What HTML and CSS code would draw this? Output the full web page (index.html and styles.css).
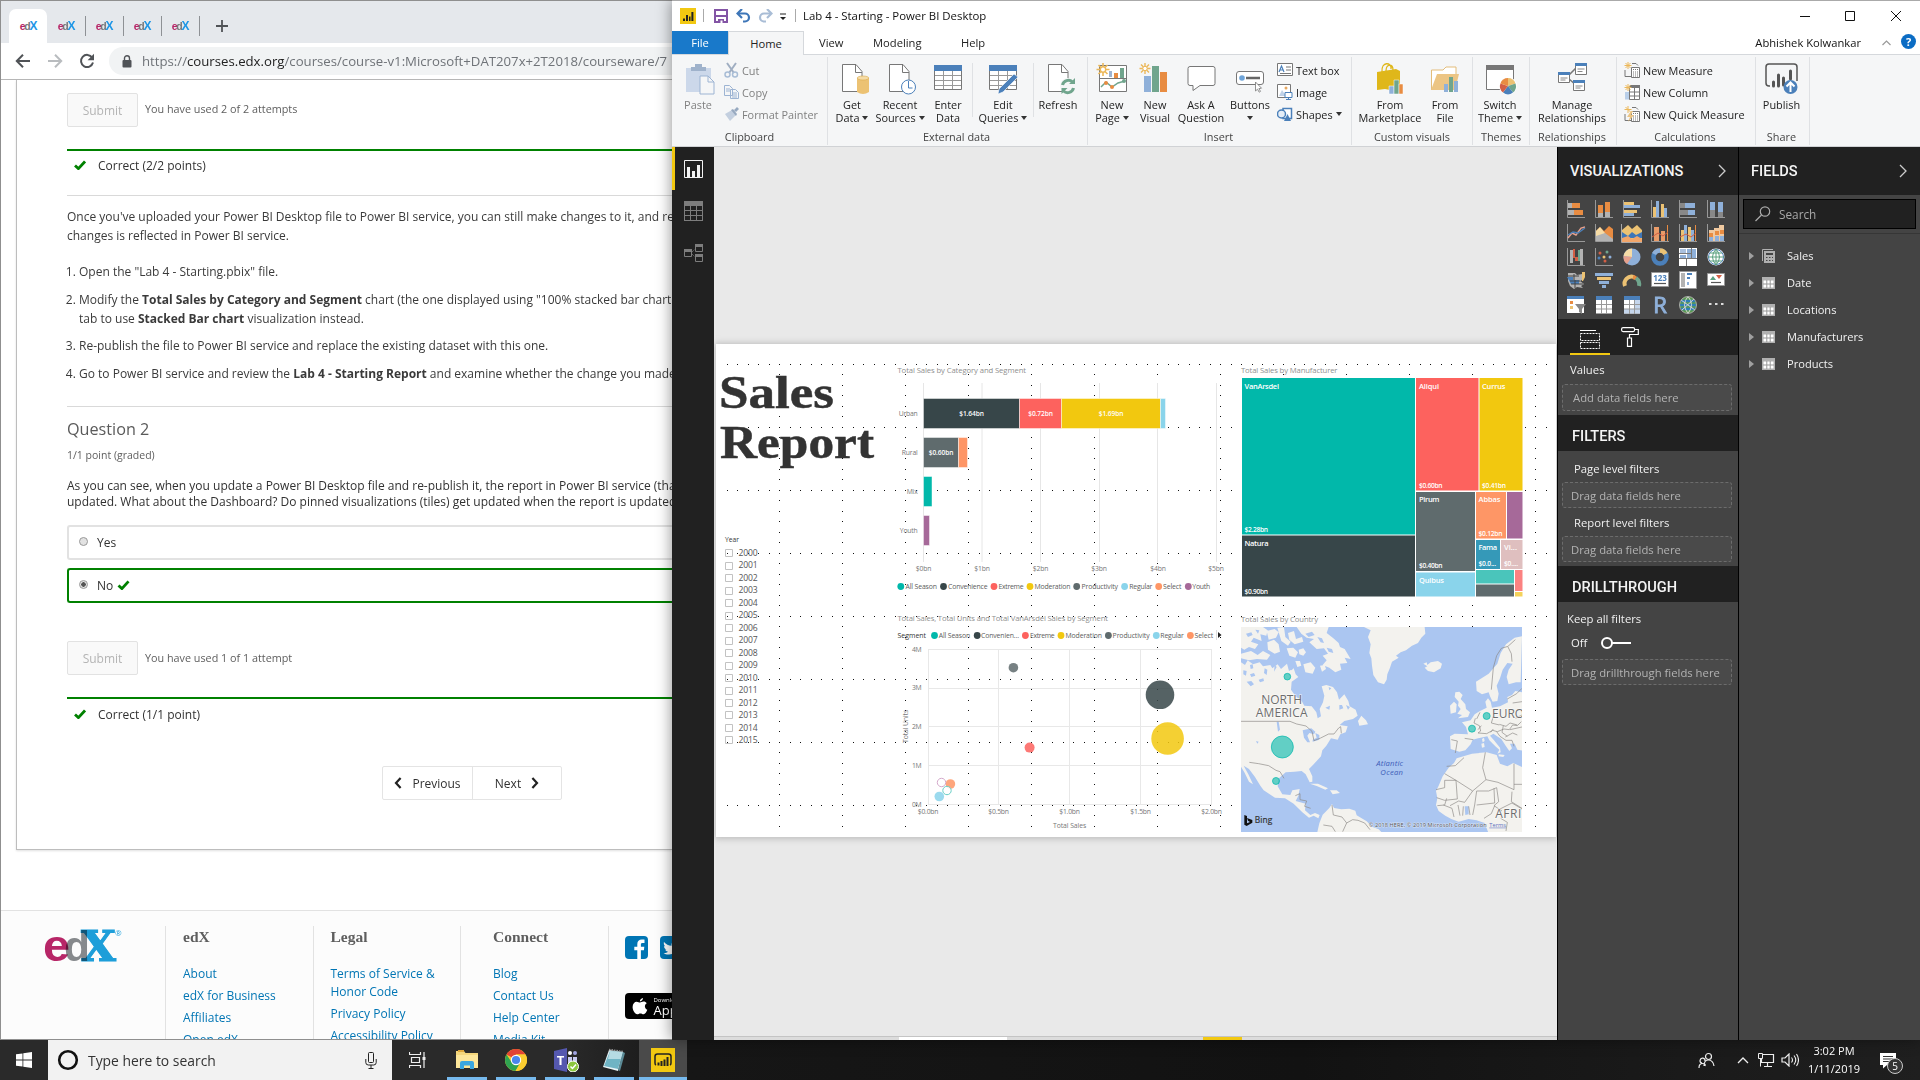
FILE: index.html
```html
<!DOCTYPE html>
<html lang="en">
<head>
<meta charset="utf-8">
<title>Lab 4 - Starting - Power BI Desktop</title>
<link rel="stylesheet" href="styles.css">
</head>
<body>
<div class="desktop">
<div class="windows">

<!-- Browser window -->
<section class="browser">
  <div class="tabstrip">
    <div class="tab active"><span class="fav"><i>e</i><b>d</b><u>X</u></span></div>
    <div class="tab"><span class="fav"><i>e</i><b>d</b><u>X</u></span></div>
    <div class="tab"><span class="fav"><i>e</i><b>d</b><u>X</u></span></div>
    <div class="tab"><span class="fav"><i>e</i><b>d</b><u>X</u></span></div>
    <div class="tab"><span class="fav"><i>e</i><b>d</b><u>X</u></span></div>
    <svg class="plus" width="12" height="12" viewBox="0 0 12 12"><path d="M6 0v12M0 6h12" stroke="#505357" stroke-width="1.8"/></svg>
  </div>
  <div class="toolbar">
    <svg class="nav" width="16" height="16" viewBox="0 0 16 16"><path d="M15 8H2M8 1.8 1.8 8 8 14.2" fill="none" stroke="#505357" stroke-width="2"/></svg>
    <svg class="nav" width="16" height="16" viewBox="0 0 16 16"><path d="M1 8h13M8 1.8 14.2 8 8 14.2" fill="none" stroke="#b9bcbf" stroke-width="2"/></svg>
    <svg class="nav" width="16" height="16" viewBox="0 0 16 16"><path d="M13.2 4.6A6.1 6.1 0 1 0 14 9.6" fill="none" stroke="#505357" stroke-width="2"/><path d="M15 .8v6.4H8.6z" fill="#505357"/></svg>
    <div class="omnibox">
      <svg width="10" height="13" viewBox="0 0 10 13"><rect x="0.5" y="5" width="9" height="7.6" rx="1" fill="#505357"/><path d="M2.5 5V3.2a2.5 2.5 0 0 1 5 0V5" fill="none" stroke="#505357" stroke-width="1.4"/></svg>
      <span class="url">https://<em>courses.edx.org</em>/courses/course-v1:Microsoft+DAT207x+2T2018/courseware/7</span>
    </div>
  </div>
  <div class="page">
    <div class="course">
      <div class="submit-row first"><span class="submit">Submit</span><span class="used">You have used 2 of 2 attempts</span></div>
      <div class="result"><svg width="12" height="10" viewBox="0 0 12 10"><path d="M1 5.4 4.4 8.6 11 1.4" fill="none" stroke="#008100" stroke-width="2.8"/></svg>Correct (2/2 points)</div>
      <div class="rule r1"></div>
      <p class="intro">Once you've uploaded your Power BI Desktop file to Power BI service, you can still make changes to it, and re<br>changes is reflected in Power BI service.</p>
      <ol class="steps">
        <li>Open the "Lab 4 - Starting.pbix" file.</li>
        <li>Modify the <b>Total Sales by Category and Segment</b> chart (the one displayed using "100% stacked bar chart<br>tab to use <b>Stacked Bar chart</b> visualization instead.</li>
        <li>Re-publish the file to Power BI service and replace the existing dataset with this one.</li>
        <li>Go to Power BI service and review the <b>Lab 4 - Starting Report</b> and examine whether the change you made</li>
      </ol>
      <div class="rule r2"></div>
      <h3>Question 2</h3>
      <div class="points">1/1 point (graded)</div>
      <p class="ask">As you can see, when you update a Power BI Desktop file and re-publish it, the report in Power BI service (tha<br>updated. What about the Dashboard? Do pinned visualizations (tiles) get updated when the report is updated</p>
      <div class="choice"><span class="radio"></span>Yes</div>
      <div class="choice right"><span class="radio on"></span>No<svg width="13" height="10" viewBox="0 0 12 10"><path d="M1 5.4 4.4 8.6 11 1.4" fill="none" stroke="#008100" stroke-width="2.8"/></svg></div>
      <div class="submit-row second"><span class="submit">Submit</span><span class="used">You have used 1 of 1 attempt</span></div>
      <div class="result two"><svg width="12" height="10" viewBox="0 0 12 10"><path d="M1 5.4 4.4 8.6 11 1.4" fill="none" stroke="#008100" stroke-width="2.8"/></svg>Correct (1/1 point)</div>
      <div class="pager">
        <span><svg width="8" height="12" viewBox="0 0 8 12"><path d="M6.6 1 2 6l4.600 5" fill="none" stroke="#222" stroke-width="2.2"/></svg>Previous</span>
        <span class="next">Next<svg width="8" height="12" viewBox="0 0 8 12"><path d="M1.400 1 6 6l-4.600 5" fill="none" stroke="#222" stroke-width="2.2"/></svg></span>
      </div>
    </div>
    <footer class="footer">
      <div class="logo-col">
        <svg width="80" height="38" viewBox="0 0 80 38"><text x="-1" y="34" class="lg-e" textLength="27" lengthAdjust="spacingAndGlyphs">e</text><text x="20" y="34" class="lg-d" textLength="26" lengthAdjust="spacingAndGlyphs">d</text><text x="37" y="34" class="lg-x" textLength="35" lengthAdjust="spacingAndGlyphs">X</text><text x="71" y="9" class="lg-r">®</text></svg>
      </div>
      <div class="fcol"><h4>edX</h4><a>About</a><a>edX for Business</a><a>Affiliates</a><a>Open edX</a></div>
      <div class="fcol"><h4>Legal</h4><a class="two">Terms of Service &amp;<br>Honor Code</a><a>Privacy Policy</a><a>Accessibility Policy</a></div>
      <div class="fcol connect"><h4>Connect</h4><a>Blog</a><a>Contact Us</a><a>Help Center</a><a>Media Kit</a></div>
      <div class="fcol social">
        <div class="soc">
          <svg width="23" height="23" viewBox="0 0 23 23"><rect width="23" height="23" rx="4" fill="#0075b4"/><path d="M12.300 23v-8.800H9.300v-3.400h3V8.200c0-3 1.800-4.600 4.500-4.600 1.300 0 2.400.1 2.700.1v3.200h-1.800c-1.500 0-1.800.7-1.800 1.700v2.200h3.400l-.4 3.400h-3V23z" fill="#fff"/></svg>
          <svg width="23" height="23" viewBox="0 0 23 23"><rect width="23" height="23" rx="4" fill="#0075b4"/><path d="M4 6c2 2.500 4.600 3.600 7.600 3.800C11 7 13 5 15 5c1.200 0 2 .4 2.700 1.100L20 5.300l-1.200 2C19 14 14 19 8.500 18.600c-2 0-3.500-.5-5-1.400 2 .1 3.500-.4 4.700-1.400-1.500-.2-2.500-1-3-2.300h1.400C5 13 4 11.800 4 10l1.400.4C4 9.300 3.500 7.600 4 6z" fill="#fff"/></svg>
        </div>
        <div class="appstore"><svg width="16" height="19" viewBox="0 0 16 19"><path d="M11 1c.1 1.700-1.400 3.400-3.100 3.400C7.700 2.700 9.300 1.200 11 1zM8 5.600c.8 0 1.900-1 3.500-1 1.400 0 2.500.7 3.200 1.700-2.700 1.700-2.200 5.300.6 6.500-.7 1.900-2.100 4.400-3.700 4.500-1.200 0-1.700-.8-3.200-.8s-2 .8-3.200.8C3 17.300.6 13.200.6 10c0-3.200 2-5.200 4-5.200 1.500 0 2.500.8 3.400.8z" fill="#fff"/></svg><span><small>Download on the</small>App Store</span></div>
      </div>
    </footer>
  </div>
</section>

<!-- Power BI window -->
<section class="pbi">
  <div class="titlebar">
    <svg width="16" height="16" viewBox="0 0 16 16"><rect width="16" height="16" fill="#f2c811"/><path d="M3 13V10.500h2V13zM6 13V7h2v6zM9 13V8.500h1.500V13zM11.400 13V4h2v9z" fill="#222"/></svg>
    <i class="vsep"></i>
    <svg class="q-save" width="14" height="14" viewBox="0 0 14 14"><path d="M1 1h12v12H1z" fill="#fff" stroke="#8354a5" stroke-width="2"/><path d="M1 7h12" stroke="#8354a5" stroke-width="2"/><path d="M4 10h6v4H4z" fill="#8354a5"/><path d="M6.500 11.500h2V14h-2z" fill="#fff"/></svg>
    <svg class="q-undo" width="15" height="14" viewBox="0 0 15 14"><path d="M2 4.500h7a4 4 0 0 1 0 8H7" fill="none" stroke="#3e76b8" stroke-width="2.200"/><path d="M6 0 1.500 4.500 6 9" fill="none" stroke="#3e76b8" stroke-width="2.200"/></svg>
    <svg class="q-redo" width="15" height="14" viewBox="0 0 15 14"><path d="M13 4.500H6a4 4 0 0 0 0 8h2" fill="none" stroke="#a9bdd6" stroke-width="2.200"/><path d="m9 0 4.500 4.500L9 9" fill="none" stroke="#a9bdd6" stroke-width="2.200"/></svg>
    <svg class="q-more" width="8" height="8" viewBox="0 0 8 8"><path d="M1 1h6" stroke="#222"/><path d="M1 4h6L4 7z" fill="#222"/></svg>
    <i class="vsep s2"></i>
    <span class="ttl">Lab 4 - Starting - Power BI Desktop</span>
    <svg class="wb" width="102" height="12" viewBox="0 0 102 12"><path d="M0 6.500h10M45.500 1.500h9v9h-9zM91 1l10 10M101 1 91 11" fill="none" stroke="#111"/></svg>
  </div>
  <div class="tabs">
    <span class="t-file">File</span><span class="t-home">Home</span><span class="t-view">View</span><span class="t-mod">Modeling</span><span class="t-help">Help</span>
    <span class="user">Abhishek Kolwankar</span>
    <svg class="collapse" width="9" height="6" viewBox="0 0 9 6"><path d="M.5 5 4.500 1l4 4" fill="none" stroke="#999" stroke-width="1.200"/></svg>
    <span class="help">?</span>
  </div>
  <div class="ribbon">
    <div class="group g-clip">
      <div class="items">
        <div class="big dim"><svg width="32" height="32" viewBox="0 0 32 32"><path d="M4 5h25v24H4z" fill="#ccd8ea"/><path d="M9 8V4h4V1h7v3h4v4z" fill="#9fb2cb"/><path d="M18 13h8l6 6v12H18z" fill="#f5f6f7" stroke="#9db4d3"/><path d="M26 13v6h6" fill="none" stroke="#9db4d3"/></svg><span>Paste</span></div>
        <div class="stack dim">
          <div><svg width="15" height="16" viewBox="0 0 15 16"><path d="M3 1l7 10M12 1 5 11" stroke="#a0aec2" stroke-width="2"/><circle cx="3.500" cy="12.500" r="2.500" fill="none" stroke="#a9bdd6" stroke-width="1.500"/><circle cx="11" cy="12.500" r="2.500" fill="none" stroke="#a9bdd6" stroke-width="1.500"/></svg>Cut</div>
          <div><svg width="15" height="16" viewBox="0 0 15 16"><path d="M.5 1.500h5l3 3v7h-8zM6.500 5.500h5l3 3v6h-8z" fill="#f5f6f7" stroke="#9db4d3"/><path d="M2 5h4M2 7h4M8 9h5M8 11h5M8 13h5" stroke="#9db4d3"/></svg>Copy</div>
          <div><svg width="15" height="16" viewBox="0 0 15 16"><path d="M1 8l7-4 4 5-6 6z" fill="#c3cfdf"/><path d="m7 4 2-1 4 5-1 2zM10 4l3-3 2 2-3 3z" fill="#97a9c0"/></svg>Format Painter</div>
        </div>
      </div>
      <div class="glabel">Clipboard</div>
    </div>
    <div class="group g-ext">
      <div class="items">
        <div class="big w48"><svg width="32" height="32" viewBox="0 0 32 32"><path d="M6.500 1.500H20l6 7v20H6.500z" fill="#fff" stroke="#777"/><path d="M19.500 1.500v8H26" fill="none" stroke="#777"/><path d="M21 15h12v14q-6 4-12 0z" fill="#ecc273"/><ellipse cx="27" cy="15" rx="5.800" ry="2" fill="#f6dca6" stroke="#d9a94b" stroke-width=".6"/></svg><span>Get<br>Data<i></i></span></div>
        <div class="big w48"><svg width="32" height="32" viewBox="0 0 32 32"><path d="M5.500 1.500H19l6 7v20H5.500z" fill="#fff" stroke="#777"/><path d="M18.500 1.500v8H25" fill="none" stroke="#777"/><circle cx="24.500" cy="24" r="7" fill="#fff" stroke="#4b80ba"/><path d="M24.500 18v7h4" fill="none" stroke="#4b80ba"/></svg><span>Recent<br>Sources<i></i></span></div>
        <div class="big w48"><svg width="32" height="32" viewBox="0 0 32 32"><path d="M2.500 3.500h27v23h-27z" fill="#fff" stroke="#777"/><path d="M2 2h28v6H2z" fill="#4b80ba"/><path d="M3 12.500h26M3 17.500h26M3 22.500h26M11.500 8v18M20.500 8v18" stroke="#999"/></svg><span>Enter<br>Data</span></div>
        <i class="gs"></i>
        <div class="big w60"><svg width="32" height="32" viewBox="0 0 32 32"><path d="M2.500 3.500h27v23h-27z" fill="#fff" stroke="#777"/><path d="M2 2h28v6H2z" fill="#4b80ba"/><path d="M3 12.500h26M3 17.500h26M3 22.500h26M11.500 8v18M20.500 8v18" stroke="#999"/><path d="M27 11l4 3-15 15-5 2 1-5z" fill="#4b80ba" stroke="#fff" stroke-width=".6"/></svg><span>Edit<br>Queries<i></i></span></div>
        <i class="gs"></i>
        <div class="big w48"><svg width="32" height="32" viewBox="0 0 32 32"><path d="M6.500 1.500H20l6 7v20H6.500z" fill="#fff" stroke="#777"/><path d="M19.500 1.500v8H26" fill="none" stroke="#777"/><circle cx="26" cy="23" r="8" fill="#f5f6f7"/><path d="M20.500 22a6 6 0 0 1 10-3M31.500 25a6 6 0 0 1-10 3" fill="none" stroke="#70a58d" stroke-width="3"/><path d="M33 15v6h-6zM19.500 31v-6h6z" fill="#70a58d"/></svg><span>Refresh</span></div>
      </div>
      <div class="glabel">External data</div>
    </div>
    <div class="group g-ins">
      <div class="items">
        <div class="big w46"><svg width="32" height="32" viewBox="0 0 32 32"><path d="M3.500 2.500h27v26h-27zM3 15.500h28" fill="#fff" stroke="#777"/><path d="M13 8h3v6h-3z" fill="#9db4d3"/><path d="M18 10h4v5h-4z" fill="#e88c42"/><path d="M24 5h4v10h-4z" fill="#70a58d"/><path d="M5 24l5-5 6 5 6-4 7-2" fill="none" stroke="#70a58d" stroke-width="1.500"/><circle cx="10" cy="20" r="2" fill="#e88c42"/><circle cx="16" cy="24" r="2" fill="#e88c42"/><circle cx="28" cy="18" r="2" fill="#70a58d"/><path d="M7 0v13M.5 6.500h13M2.500 2l9 9M11.500 2l-9 9" stroke="#ecb85a" stroke-width="1.600"/><circle cx="7" cy="6.500" r="2.700" fill="#fff" stroke="#ecb85a" stroke-width="1.400"/></svg><span>New<br>Page<i></i></span></div>
        <div class="big w40"><svg width="32" height="32" viewBox="0 0 32 32"><path d="M5 13h7v16H5z" fill="#8fb0d9"/><path d="M13 3h7v26h-7z" fill="#70a58d"/><path d="M21 9h7v20h-7z" fill="#e88c42"/><path d="M6 0v11M.5 5.500h11M2 1.500l8 8M10 1.500l-8 8" stroke="#ecb85a" stroke-width="1.400"/><circle cx="6" cy="5.500" r="2.200" fill="#fff" stroke="#ecb85a"/></svg><span>New<br>Visual</span></div>
        <div class="big w52"><svg width="32" height="32" viewBox="0 0 32 32"><path d="M5 3.500h23q2 0 2 2v15q0 2-2 2H15l-7 5v-5H5q-2 0-2-2v-15q0-2 2-2z" fill="#fff" stroke="#777"/></svg><span>Ask A<br>Question</span></div>
        <div class="big w46"><svg width="32" height="32" viewBox="0 0 32 32"><rect x="2.500" y="8.500" width="27" height="13" rx="2.500" fill="#fff" stroke="#777"/><circle cx="8" cy="15" r="2.800" fill="#6ea4d9"/><path d="M12 15h14" stroke="#666" stroke-width="2.500"/><path d="M21.500 19v9l2-1.800 1.700 3 1.300-.8-1.600-2.800 2.600-.4z" fill="#fff" stroke="#777" stroke-width=".8"/></svg><span>Buttons<br><i class="only"></i></span></div>
        <div class="stack st2">
          <div><svg width="16" height="16" viewBox="0 0 16 16"><path d="M.5 1.500h15v12H.5z" fill="#fff" stroke="#777"/><path d="M2 10l2.500-6L7 10M3 8h3" fill="none" stroke="#4b80ba" stroke-width="1.200"/><path d="M9 5h5M9 8h5M3 11.500h11" stroke="#777"/></svg>Text box</div>
          <div><svg width="16" height="16" viewBox="0 0 16 16"><path d="M.5.500h13v13H.5z" fill="#fff" stroke="#777"/><path d="M2 12l3-6 4 6z" fill="#c0d2e8"/><circle cx="9" cy="4" r="1.500" fill="#e8a860"/><path d="M8 8.500h7v5H8zM11.500 14v2M9 15.500h5" fill="#fff" stroke="#4b80ba"/></svg>Image</div>
          <div><svg width="16" height="16" viewBox="0 0 16 16"><path d="M6 2.500h8.500v10H6z" fill="#fff" stroke="#4b80ba" stroke-width="1.500"/><circle cx="4.500" cy="8" r="4" fill="#e6eef7" stroke="#4b80ba" stroke-width="1.500"/><path d="M7 15l3.500-7 3.500 7z" fill="#4b80ba"/></svg>Shapes<i class="car"></i></div>
        </div>
      </div>
      <div class="glabel">Insert</div>
    </div>
    <div class="group g-cus">
      <div class="items">
        <div class="big w70"><svg width="32" height="32" viewBox="0 0 32 32"><path d="M3 9l19-3 4 2v21l-15-3-8 1z" fill="#dfb71a"/><path d="M8 9c-1-11 10-10 9-3M12 8c0-8 7-7 7-1" fill="none" stroke="#dfb71a" stroke-width="1.300"/><path d="M15 23h5v8h-5z" fill="#8fb0d9" stroke="#fff" stroke-width=".5"/><path d="M20 17h5v14h-5z" fill="#70a58d" stroke="#fff" stroke-width=".5"/><path d="M25 21h4v10h-4z" fill="#e88c42" stroke="#fff" stroke-width=".5"/></svg><span>From<br>Marketplace</span></div>
        <div class="big w40"><svg width="32" height="32" viewBox="0 0 32 32"><path d="M2.500 27V7H14l3-3h10v23" fill="#fff" stroke="#e3bd7a"/><path d="M2 27l6-16h22l-4 16z" fill="#ecc584"/><path d="M15 21h4v8h-4z" fill="#8fb0d9"/><path d="M20 14h4v15h-4z" fill="#70a58d"/><path d="M25 18h4v11h-4z" fill="#8fb0d9"/></svg><span>From<br>File</span></div>
      </div>
      <div class="glabel">Custom visuals</div>
    </div>
    <div class="group g-thm">
      <div class="items">
        <div class="big w54"><svg width="32" height="32" viewBox="0 0 32 32"><path d="M2.500 4.500h27v22h-27z" fill="#fff" stroke="#777"/><path d="M2 2h28v5H2z" fill="#777"/><circle cx="24" cy="23" r="9" fill="#fff"/><path d="M24 23l0-8a8 8 0 0 1 7.500 5.500z" fill="#ecc273"/><path d="M24 23l7.500-2.500A8 8 0 0 1 29 29.500z" fill="#70a58d"/><path d="M24 23l5 6.500a8 8 0 0 1-10 0z" fill="#4b80ba"/><path d="M24 23l-5 6.500a8 8 0 0 1-2.600-9z" fill="#d35f45"/><path d="M24 23l-7.600-2.500A8 8 0 0 1 24 15z" fill="#e88c42"/></svg><span>Switch<br>Theme<i></i></span></div>
      </div>
      <div class="glabel">Themes</div>
    </div>
    <div class="group g-rel">
      <div class="items">
        <div class="big w84"><svg width="32" height="32" viewBox="0 0 32 32"><path d="M13 12l8-8M13 16l7 6" stroke="#777" stroke-width="1.600"/><path d="M2.500 10.500h11v9h-11zM19.500 1.500h11v10h-11zM17.500 18.500h11v9h-11z" fill="#fff" stroke="#777"/><path d="M2 9h12v3H2zM19 0h12v3H19zM17 17h12v3H17z" fill="#4b80ba"/><path d="M4.500 15h7M4.500 17h5M21.500 6h7M21.500 8.500h5M19.500 23h7M19.500 25h5" stroke="#888"/></svg><span>Manage<br>Relationships</span></div>
      </div>
      <div class="glabel">Relationships</div>
    </div>
    <div class="group g-calc">
      <div class="items">
        <div class="stack">
          <div><svg width="16" height="16" viewBox="0 0 16 16"><path d="M1 8v6.500h6M8 1.500h4l2 2" fill="none" stroke="#777"/><path d="M7.500 5.500h8v10h-8z" fill="#fff" stroke="#777"/><path d="M9 7.500h5M9 10h5M9 12h5M9 14h5" stroke="#777" stroke-dasharray="1 1"/><path d="M4 0v7M.5 3.500h7M1.500 1l5 5M6.500 1l-5 5" stroke="#ecb85a"/></svg>New Measure</div>
          <div><svg width="16" height="16" viewBox="0 0 16 16"><path d="M1 8h5v7.500H1z" fill="#b9cfe9"/><path d="M5.500 2.500h10v13h-10zM6 8h10M6 12h10M10.500 3v12" fill="#fff" stroke="#777"/><path d="M6 1h10v3H6z" fill="#777"/><path d="M4 0v7M.5 3.500h7M1.500 1l5 5M6.500 1l-5 5" stroke="#ecb85a"/></svg>New Column</div>
          <div><svg width="16" height="16" viewBox="0 0 16 16"><path d="M1 8v6.500h6M8 1.500h4l2 2" fill="none" stroke="#777"/><path d="M7.500 5.500h8v10h-8z" fill="#fff" stroke="#777"/><path d="M9 7.500h5M9 10h5M9 12h5M9 14h5" stroke="#777" stroke-dasharray="1 1"/><path d="M4 0v7M.5 3.500h7M1.500 1l5 5" stroke="#ecb85a"/><path d="M7 5l-4 6h3l-2 5 6-7H7l2-4z" fill="#ecc584"/></svg>New Quick Measure</div>
        </div>
      </div>
      <div class="glabel">Calculations</div>
    </div>
    <div class="group g-shr">
      <div class="items">
        <div class="big w51"><svg width="34" height="32" viewBox="0 0 34 32"><path d="M5 23H4q-3 0-3-3V4q0-3 3-3h25q3 0 3 3v14" fill="none" stroke="#555" stroke-width="1.500"/><path d="M8.500 19v4M13.500 12v11M18.500 15v7M25.500 8v8" stroke="#555" stroke-width="3" stroke-linecap="round"/><circle cx="25.500" cy="24" r="7" fill="#4b80ba"/><path d="M25.500 29v-9M21.500 23.500l4-4 4 4" fill="none" stroke="#fff" stroke-width="2"/></svg><span>Publish</span></div>
      </div>
      <div class="glabel">Share</div>
    </div>
  </div>

  <div class="work">
    <div class="rail">
      <div class="r on"><svg width="19" height="18" viewBox="0 0 19 18"><path d="M.5.500h18v17H.5z" fill="none" stroke="#f3f3f3"/><path d="M3 7h3v10H3zM8 11h3v6H8zM13 5h3v12h-3z" fill="#f3f3f3"/></svg></div>
      <div class="r"><svg width="19" height="20" viewBox="0 0 19 20"><path d="M0 0h19v5H0z" fill="#7d7d7d"/><path d="M.5.500v19h18V.500M0 9.500h19M0 14.500h19M6.500 5v15M12.500 5v15M0 19.500h19" fill="none" stroke="#7d7d7d"/></svg></div>
      <div class="r"><svg width="19" height="18" viewBox="0 0 19 18"><path d="M.5 5.500h7v7h-7zM11.500.500h7v7h-7zM11.500 10.500h7v7h-7z" fill="none" stroke="#7d7d7d"/><path d="M0 5h8v3H0zM11 0h8v3h-8zM11 10h8v3h-8z" fill="#7d7d7d"/><path d="M8 8l3-3M8 10l3 3" stroke="#7d7d7d" stroke-dasharray="1 1"/></svg></div>
    </div>

    <div class="canvas">
    <svg class="report" viewBox="714 147 843 889" width="843" height="889">
      <defs>
        <pattern id="rowdots" patternUnits="userSpaceOnUse" x="727" y="364" width="21" height="63"><path d="M0 0h1v1H0zM10 0h1v1h-1z" fill="#111"/></pattern>
        <pattern id="coldots" patternUnits="userSpaceOnUse" x="779" y="374" width="63" height="21"><path d="M0 0h1v1H0zM0 11h1v1H0z" fill="#111"/></pattern>
        <clipPath id="mapclip"><rect x="33" y="66" width="843" height="615"/></clipPath>
        <filter id="sh" x="-5%" y="-5%" width="110%" height="110%"><feGaussianBlur stdDeviation="3"/></filter>
      </defs>
      <rect x="715" y="343" width="842" height="496" fill="#bdbdbd" filter="url(#sh)"/>
      <rect x="716" y="344" width="840" height="493" fill="#fff"/>
      <rect x="727" y="364" width="820" height="443" fill="url(#rowdots)" shape-rendering="crispEdges"/>
      <rect x="779" y="374" width="758" height="454" fill="url(#coldots)" shape-rendering="crispEdges"/>

      <g class="headline"><text x="719" y="407.500" textLength="115" lengthAdjust="spacingAndGlyphs">Sales</text><text x="720" y="457.500" textLength="154" lengthAdjust="spacingAndGlyphs">Report</text></g>

      <g class="slicer">
        <text x="725" y="541.500" class="yr" textLength="14" lengthAdjust="spacingAndGlyphs">Year</text>
        <g fill="#fff" stroke="#c2c2c2">
          <path d="M725.500 549.500h7v7h-7zM725.500 562.500h7v7h-7zM725.500 574.500h7v7h-7zM725.500 587.500h7v7h-7zM725.500 599.500h7v7h-7zM725.500 612.500h7v7h-7zM725.500 624.500h7v7h-7zM725.500 637.500h7v7h-7zM725.500 649.500h7v7h-7zM725.500 662.500h7v7h-7zM725.500 674.500h7v7h-7zM725.500 687.500h7v7h-7zM725.500 699.500h7v7h-7zM725.500 711.500h7v7h-7zM725.500 724.500h7v7h-7zM725.500 736.500h7v7h-7z"/>
        </g>
        <path d="M727 553h1v1h-1zM727 616h1v1h-1zM727 679h1v1h-1zM727 742h1v1h-1z" fill="#111"/>
        <text x="738.500" y="555.500">2000</text><text x="738.500" y="568">2001</text><text x="738.500" y="580.500">2002</text><text x="738.500" y="593">2003</text><text x="738.500" y="605.500">2004</text><text x="738.500" y="618">2005</text><text x="738.500" y="630.500">2006</text><text x="738.500" y="643">2007</text><text x="738.500" y="655.500">2008</text><text x="738.500" y="668">2009</text><text x="738.500" y="680.500">2010</text><text x="738.500" y="693">2011</text><text x="738.500" y="705.500">2012</text><text x="738.500" y="718">2013</text><text x="738.500" y="730.500">2014</text><text x="738.500" y="743">2015</text>
      </g>

      <!-- Stacked bar chart -->
      <g class="ct"><text x="897.500" y="372.800" textLength="128.500">Total Sales by Category and Segment</text></g>
      <path d="M923.500 383v179M982 383v179M1040.500 383v179M1099.500 383v179M1157.500 383v179M1216.500 383v179" stroke="#e6e6e6"/>
      <g stroke="#fff" stroke-opacity=".45">
        <path d="M923.500 398.500h96v30h-96z" fill="#374649"/><path d="M1019.500 398.500h42v30h-42z" fill="#fd625e"/><path d="M1061.500 398.500h99v30h-99z" fill="#f2c80f"/><path d="M1160.500 398.500h5v30h-5z" fill="#8ad4eb"/>
        <path d="M923.500 437.500h35v30h-35z" fill="#5f6b6d"/><path d="M958.500 437.500h9v30h-9z" fill="#fe9666"/>
        <path d="M923.500 476.500h8.500v30h-8.500z" fill="#01b8aa"/><path d="M923.500 515.500h6v30h-6z" fill="#a66999"/>
      </g>
      <g class="dl"><text x="971.500" y="416">$1.64bn</text><text x="1040.500" y="416">$0.72bn</text><text x="1111" y="416">$1.69bn</text><text x="941" y="455">$0.60bn</text></g>
      <g class="ax end"><text x="917.500" y="416">Urban</text><text x="917.500" y="455">Rural</text><text x="917.500" y="494">Mix</text><text x="917.500" y="533">Youth</text></g>
      <g class="ax mid"><text x="923.500" y="571">$0bn</text><text x="982" y="571">$1bn</text><text x="1040.500" y="571">$2bn</text><text x="1099" y="571">$3bn</text><text x="1158" y="571">$4bn</text><text x="1216" y="571">$5bn</text></g>
      <g><circle cx="900.800" cy="586.500" r="3.400" fill="#01b8aa"/><circle cx="943.500" cy="586.500" r="3.400" fill="#374649"/><circle cx="994" cy="586.500" r="3.400" fill="#fd625e"/><circle cx="1030" cy="586.500" r="3.400" fill="#f2c80f"/><circle cx="1076.700" cy="586.500" r="3.400" fill="#5f6b6d"/><circle cx="1124.600" cy="586.500" r="3.400" fill="#8ad4eb"/><circle cx="1158.700" cy="586.500" r="3.400" fill="#fe9666"/><circle cx="1188.300" cy="586.500" r="3.400" fill="#a66999"/></g>
      <g class="lg"><text x="905.500" y="589" textLength="31.500">All Season</text><text x="948" y="589" textLength="39.500">Convenience</text><text x="998.500" y="589" textLength="25">Extreme</text><text x="1034.500" y="589" textLength="36">Moderation</text><text x="1081.500" y="589" textLength="36.500">Productivity</text><text x="1129.300" y="589" textLength="23">Regular</text><text x="1163" y="589" textLength="18.500">Select</text><text x="1192.300" y="589" textLength="18">Youth</text></g>

      <!-- Scatter chart -->
      <g class="ct"><text x="897.500" y="620.800" textLength="210.500">Total Sales, Total Units and Total VanArsdel Sales by Segment</text></g>
      <g><circle cx="934.500" cy="635.500" r="3.400" fill="#01b8aa"/><circle cx="977.200" cy="635.500" r="3.400" fill="#374649"/><circle cx="1025.400" cy="635.500" r="3.400" fill="#fd625e"/><circle cx="1061" cy="635.500" r="3.400" fill="#f2c80f"/><circle cx="1108.400" cy="635.500" r="3.400" fill="#5f6b6d"/><circle cx="1156.300" cy="635.500" r="3.400" fill="#8ad4eb"/><circle cx="1190.400" cy="635.500" r="3.400" fill="#fe9666"/></g>
      <g class="lg"><text x="897.500" y="638" textLength="28.500" class="seg">Segment</text><text x="938.700" y="638" textLength="31.500">All Season</text><text x="981" y="638" textLength="38">Convenien...</text><text x="1030" y="638" textLength="24.500">Extreme</text><text x="1065.500" y="638" textLength="36.500">Moderation</text><text x="1112.600" y="638" textLength="37">Productivity</text><text x="1160.300" y="638" textLength="23.500">Regular</text><text x="1194.600" y="638" textLength="18.500">Select</text></g>
      <path d="M1216.500 630v10" stroke="#ddd"/><path d="M1218 632l3.500 3-3.500 3z" fill="#222"/>
      <path d="M928 649.500h283M928 688.500h283M928 726.500h283M928 765.500h283M928 804.500h283M928.500 649v156M998.500 649v156M1069.500 649v156M1140.500 649v156M1211.500 649v156" stroke="#e8e8e8"/>
      <g class="ax end"><text x="921.500" y="652">4M</text><text x="921.500" y="690">3M</text><text x="921.500" y="729">2M</text><text x="921.500" y="768">1M</text><text x="921.500" y="807">0M</text></g>
      <g class="ax mid"><text x="928" y="814">$0.0bn</text><text x="998.500" y="814">$0.5bn</text><text x="1069.500" y="814">$1.0bn</text><text x="1140.500" y="814">$1.5bn</text><text x="1211.500" y="814">$2.0bn</text><text x="1069.500" y="828" textLength="33">Total Sales</text><text transform="translate(908 726.500) rotate(-90)" textLength="33">Total Units</text></g>
      <g fill-opacity=".85"><circle cx="1013.400" cy="667.700" r="4.800" fill="#5f6b6d"/><circle cx="1160" cy="694.800" r="14.300" fill="#374649"/><circle cx="1167.600" cy="738.500" r="16.300" fill="#f2c80f"/><circle cx="1029.600" cy="747.600" r="5" fill="#fd625e"/><circle cx="950.400" cy="784" r="4.800" fill="#fe9666"/><circle cx="939.300" cy="796.500" r="4.800" fill="#8ad4eb"/></g>
      <circle cx="941.500" cy="782.500" r="4.200" fill="#fff" stroke="#d4a9cb"/><circle cx="947" cy="790.500" r="4.200" fill="#fff" fill-opacity=".8" stroke="#68cfc6"/>

      <!-- Treemap -->
      <g class="ct"><text x="1241" y="372.800" textLength="96.500">Total Sales by Manufacturer</text></g>
      <rect x="1241" y="377" width="282" height="220" fill="#fff"/>
      <g>
        <path d="M1242 378h173v156.500h-173z" fill="#01b8aa"/><path d="M1242 535.500h173v61h-173z" fill="#374649"/>
        <path d="M1416 378h62.500v112.500H1416z" fill="#fd625e"/><path d="M1479.500 378h43v112.500h-43z" fill="#f2c80f"/>
        <path d="M1416 492h59v79h-59z" fill="#5f6b6d"/><path d="M1416 572.500h59v24h-59z" fill="#8ad4eb"/>
        <path d="M1476 492h30v46.500h-30z" fill="#fe9666"/><path d="M1507 492h15.500v46.500H1507z" fill="#a66999"/>
        <path d="M1476 540h24v29h-24z" fill="#3599b8"/><path d="M1501 540h21.500v29H1501z" fill="#dfbfbf"/>
        <path d="M1476 570h38v13.500h-38z" fill="#4ac5bb"/><path d="M1476 584.500h38v12h-38z" fill="#5f6b6d"/>
        <path d="M1515 570h7.500v21h-7.500z" fill="#fb8281"/><path d="M1515 592h7.500v4.500h-7.500z" fill="#f4d25a"/>
      </g>
      <g class="tm"><text x="1244.500" y="389" textLength="34.500">VanArsdel</text><text x="1244.500" y="546" textLength="24">Natura</text><text x="1419" y="389" textLength="20">Aliqui</text><text x="1482" y="389" textLength="23.500">Currus</text><text x="1419" y="502" textLength="20.500">Pirum</text><text x="1419" y="583" textLength="25">Quibus</text><text x="1478.500" y="502" textLength="22">Abbas</text><text x="1478.500" y="550" textLength="18.500">Fama</text><text x="1504" y="550" textLength="13">Vi...</text></g>
      <g class="tv"><text x="1244.500" y="532" textLength="23.500">$2.28bn</text><text x="1244.500" y="594" textLength="23.500">$0.90bn</text><text x="1419" y="488" textLength="23.500">$0.60bn</text><text x="1482" y="488" textLength="24">$0.41bn</text><text x="1419" y="568" textLength="23.500">$0.40bn</text><text x="1478.500" y="536" textLength="24">$0.12bn</text><text x="1478.500" y="566" textLength="17.500">$0.0...</text><text x="1504" y="566" textLength="14">$0....</text></g>

      <!-- Map -->
      <g class="ct"><text x="1241" y="621.500" textLength="77">Total Sales by Country</text></g>
      <g transform="translate(1230 605) scale(.33333)" clip-path="url(#mapclip)">
        <rect x="33" y="66" width="843" height="615" fill="#abc6f1"/>
        <g fill="#f3f2ee">
          <path d="M33 440V172l12 8 8-14 16 12 20-6 10 12 22-4 6 10 16-12 10 14 18-16 6 22 14-8 6 18 8 8-20 14-2 24 14 20 18 14 8 14 22 2 14 18 4 18 10-6-4-22 10-20 4-20-8-28 14-4 20 6 12 16 6 22 16-16 12 20 4 16 18 10 6 18-14 10-26 6-14 12 24 4-6 18-16 6-8 16-20-4-14 22-12 14-4 18-22 24-14 14 10 22 0 16-8 2-12-24-12-10-22 2-26 2-20 18-4 24 14 24 24 2 6-14 22-4-4 20-8 16 30 8-2 20 16 14 14-6 14 6-4 10-14-8-14 6-20-16-26-26-26-16-30-2-34-22-10-14-16-26-18-24-16-10 14 26 14 30-12-8-14-28-12-20-14-14z"/>
          <path d="M33 66h66l14 10-4 16-18-4 4 20-24-10-8 12 22 8-10 14-18-6-14 8-10-6zM110 78l24-6 12 10-8 16-22 6zM33 146l30-8 20 12 16-12 22 12-10 14-30-2-24 4-24-6zM112 112l20-8 14 14 4 22-16 6-20-12zM142 68l20-2 4 30 16 14-8 12-20-14zM174 84l18-6 6 24 18-6 4 14-26 8-16-14zM200 66h96l-6 18 20 16 16 14 4 12 14 6 18 30-18-4 8 16-22 2 4 18-18 8-18-14-20-8 12-14-12-14 16-6-12-16-22 2-22-20 14-10-22-4-16-12zM220 178l22-6 14 16-8 18-22-4zM170 130l20-2 14 14-8 16-18-6zM206 134l14-4 8 12-8 10-12-4zM270 182l14-2 4 12-12 8zM196 168l14 0 4 14-12 4z"/>
          <path d="M402 66h182l2 20-12 12-10 16-18 8-18 14-16 6-14 10 8 6-20 12-6 18-8 20-2 16-8 14-18-6-14-22-4-28-2-22-6-16 4-26-8-22 8-20z"/>
          <path d="M580 176l10-4 2 8 10-8 22-4 12 8-4 14-20 12-18-4-10-10 8-4zM676 262l12-2 10 10-6 12 14 16 2 14 12 10-6 14-30 4 12-10-14-4 10-14-8-10 2-12-12-14zM660 302l12-12 8 8-2 24-16 4zM384 348l10-16 14 14 6 12-26 4zM240 536l24 0 30 14-8 4-24-10zM300 556l20 0 10 8-22 4z"/>
          <path d="M876 94l-22 4-26 20-16 26-10 32-26 30-38 24 2 28 16 10 20-6 4 12 8 16 14-2 4-22-6-24 10-22 8-26 14-20 16 2-12 18-6 22 6 22 22-6 14 0z"/>
          <path d="M876 262l-20-4-10 12-14 6 2 16-24 12-24 4-4-18-8-10-8 10 4 18-20 10-16 10-12 18-26 6 12 14 6 22-40-2-14 8 2 38 26 8 18-4 16-18 6-14 24-6 20-4 6 12 18 18 12 10-6 12 10-4-2-14-18-22-12-14 10-6 24 16 14 22 10 14 8-8-6-14 14 0 8 18 24 4z"/>
          <path d="M876 486l-26-12-18 10-22-8-10-26-30-8-44 4-46 14-8 14-16 14-18 26-12 28-8 16 4 22-4 20 8 18 20 14 18 10 22 8 30-8 24 4 24 8 14 37h98z"/>
          <path d="M262 681l6-26 10-26 20-20 8-12 6 12 22 4 24-2 18 6 4 14 30 18 16 16 20 8 8 8z"/>
          <path d="M756 402l6-4 2 10-6 4zM754 416l8-2 2 12-8 2zM806 448l18 2-4 6-14-2z"/>
        </g>
        <g fill="#abc6f1"><path d="M218 376l26-6 12 10-4 8-14-4-6 8 8 20-8 0-10-14zM256 384l12 6 0 14-20 6 0-6 12-6zM140 350l6 0 4 24-6 6zM78 408l8 2-4 6zM60 208l12-4 4 8-12 4zM86 224l14-4 2 8-12 4zM180 182l10 4-4 10-10-4zM328 300l8 0 4 10-12 4zM296 246l8 4-6 6zM60 180l8-2 2 12-8 2zM704 604l12 0 0 24-10 2zM48 86l16-4 4 8-14 6zM76 74l12 2-4 10zM226 86l20-6 8 10-18 6zM262 96l14 4 6 14-10-2zM290 128l16 4 4 12-14-4zM50 230l14-2 8 10-10 6zM104 190l8 4-2 16-8-6zM134 180l6 6-8 14zM40 196l10 2-2 14-8-4zM286 308l14-6-2 12zM348 300l12 6-6 8z"/></g>
        <g fill="none" stroke="#8b8885" stroke-width="2">
          <path d="M33 349h147l20 8 28 6 18 16 6 28 20-8 24-12 16 0 14-18 6-4 2 20M58 472l28 4 30 6 22 14 12 4 12 20M196 572l14-6 0 18 20 4-6 16 18 6M306 600l4 30 26 6 14 18-12 26M350 654l18-10 16 2 20 8 16 20M280 660l26 4 10 16"/>
          <path d="M856 104l-22 20-20 6-14 22-10 36-6 66M834 126l10 20 2 24M876 250l-16 16-28 16M876 290l-28 4M664 404l18 4-6 36M704 400l26 4M736 340l-4 14 16 8 4 16-8 6 26 2 18-10 14 4 20-8 16 2 10-14 14 2 12-12M790 334l-6 20 24 6M808 358l20 6 12-10 22 6M800 380l10 14 18 12 18 0 6 18M820 362l-4 20 16 12M840 374l36-8M826 396l22-12 14 6M790 372l-8 10M754 362l-10 12M856 340l20-10M750 322l-10 20"/>
          <path d="M650 484l26-2 26-24M644 506l34 20-34 0 0 22-26 6M678 526l4 56-38 4-24-8M678 526l50 32 40-34-10-36 8-46M768 524l36 8 48 22V476M852 538h24M728 558l-24 34-18-4-26 14M734 600l6-42 36 0 24-10M740 600l54-6-2-44M800 548l6 42-14 12 24 16M640 600l26 10 6 26M684 600l6 32M700 604l-2 28M716 604l4 26M734 600l-6 30M794 602l-10 24-22 14M650 580l-6 20-22 2M846 560l-2 30 32 20M806 614l40-20 30 18M812 640l20 12-4 26"/>
        </g>
        <g class="mp"><text x="94" y="297" textLength="122">NORTH</text><text x="77" y="336" textLength="156">AMERICA</text><text x="786" y="340" textLength="138">EUROPE</text><text x="796" y="640" textLength="126">AFRICA</text></g>
        <g class="oc"><text x="439" y="482" textLength="80">Atlantic</text><text x="451" y="510" textLength="68">Ocean</text></g>
        <g fill="#01b8aa" fill-opacity=".6" stroke="#01b8aa" stroke-opacity=".7" stroke-width="3"><circle cx="172" cy="215" r="10"/><circle cx="157" cy="426" r="33"/><circle cx="138" cy="528" r="10.500"/><circle cx="770" cy="333" r="10.500"/><circle cx="726" cy="371" r="10.500"/></g>
        <path d="M43 630l8 3v22l9-4-6-4-3-8 16 6v8l-17 10-7-4z" fill="#111"/>
        <text x="74" y="655" class="bing" textLength="53">Bing</text>
        <text x="416" y="665" class="cr" textLength="354">© 2018 HERE, © 2019 Microsoft Corporation</text><text x="778" y="665" class="terms" textLength="50">Terms</text>
      </g>
    </svg>
    <div class="sheets"><span class="s-on"></span><span class="s-add"></span></div>
    </div>

    <div class="viz">
      <div class="ph"><span>VISUALIZATIONS</span><svg width="8" height="14" viewBox="0 0 8 14"><path d="M1 1l6 6-6 6" fill="none" stroke="#ccc" stroke-width="1.300"/></svg></div>
      <div class="grid">
        <svg viewBox="0 0 18 18"><path d="M.5 0v17.500H18" fill="none" stroke="#999"/><path d="M1 3h4v5H1zM1 10h6v5H1z" fill="#b3b3b3"/><path d="M5 3h8v5H5zM7 10h9v5H7z" fill="#e88c42"/></svg>
        <svg viewBox="0 0 18 18"><path d="M.5 0v17.500H18" fill="none" stroke="#999"/><path d="M3 5h5v8H3zM10 2h5v10h-5z" fill="#e88c42"/><path d="M3 13h5v4H3zM10 12h5v5h-5z" fill="#b3b3b3"/></svg>
        <svg viewBox="0 0 18 18"><path d="M.5 0v17.500H18" fill="none" stroke="#999"/><path d="M1 2h10v3H1zM1 10h13v3H1z" fill="#ecc273"/><path d="M1 5h16v3H1zM1 13h10v3H1z" fill="#8fb0d9"/></svg>
        <svg viewBox="0 0 18 18"><path d="M.5 0v17.500H18" fill="none" stroke="#999"/><path d="M2 7h3v10H2zM10 4h3v13h-3z" fill="#ecc273"/><path d="M5 1h3v16H5zM13 8h3v9h-3z" fill="#8fb0d9"/></svg>
        <svg viewBox="0 0 18 18"><path d="M.5 0v17.500H18" fill="none" stroke="#999"/><path d="M1 3h5v5H1zM1 10h8v5H1z" fill="#888"/><path d="M6 3h10v5H6zM9 10h7v5H9z" fill="#8fb0d9"/></svg>
        <svg viewBox="0 0 18 18"><path d="M.5 0v17.500H18" fill="none" stroke="#999"/><path d="M3 2h5v8H3zM11 2h5v10h-5z" fill="#8fb0d9"/><path d="M3 10h5v7H3zM11 12h5v5h-5z" fill="#888"/></svg>

        <svg viewBox="0 0 18 18"><path d="M.5 0v17.500H18" fill="none" stroke="#999"/><path d="M1 14l4-5 4 2 5-7 4-1" fill="none" stroke="#e6a08c" stroke-width="1.400"/><path d="M1 11l5-3 5 1 7-5" fill="none" stroke="#4b80ba" stroke-width="1.400"/></svg>
        <svg viewBox="0 0 18 18"><path d="M.5 0v17.500H18" fill="none" stroke="#999"/><path d="M1 7l4-4 4 4 5-5 4 3v12H1z" fill="#e88c42"/><path d="M1 7l4-4 5 6-3 5-6-2z" fill="#f6dca6"/><path d="M1 12l9-3 8 6v2H1z" fill="#b3b3b3"/></svg>
        <svg viewBox="0 0 18 18"><path d="M-1 6l6-5 4 4 5-4 5 5v11H-1z" fill="#ecc273"/><path d="M-1 8l6 4 4-4 4 3 6-3v6H-1z" fill="#3e76b8"/><path d="M-1 14l6-2 4 3 5-3 5 3v3H-1z" fill="#f2a66a"/><path d="M-1.500 0v18.500H19" fill="none" stroke="#aaa"/></svg>
        <svg viewBox="0 0 18 18"><path d="M.5 0v17.500H18" fill="none" stroke="#999"/><path d="M3 3h5v14H3zM10 7h4v10h-4z" fill="#e99b68"/><path d="M16.500 1v16" stroke="#e88c42"/><path d="M1 13l6-4 5 3 5-4" fill="none" stroke="#d35f45"/></svg>
        <svg viewBox="0 0 18 18"><path d="M.5 0v17.500H18" fill="none" stroke="#999"/><path d="M2 6h3v11H2zM9 3h3v14H9z" fill="#ecc273"/><path d="M5 1h3v16H5zM12 6h3v11h-3z" fill="#8fb0d9"/><path d="M16.500 1v16" stroke="#e88c42"/><path d="M1 13l6-3 5 3 5-4" fill="none" stroke="#d35f45"/></svg>
        <svg viewBox="0 0 18 18"><path d="M.5 0v17.500H18" fill="none" stroke="#999"/><path d="M2 6h5v11H2zM7 4h5v13H7zM12 1h5v16h-5z" fill="#f0c9a0"/><path d="M2 9h4v4H2zM8 7h4v4H8zM13 6h4v4h-4z" fill="#e88c42"/><path d="M2 13h4v4H2zM8 12h4v5H8zM13 12h4v5h-4z" fill="#8fb0d9"/></svg>

        <svg viewBox="0 0 18 18"><path d="M.5 0v17.500H18" fill="none" stroke="#999"/><path d="M3 2h3v13H3zM13 1h3v16h-3z" fill="#b3b3b3"/><path d="M6 1h2v8h3v4H8v-3H6z" fill="#d35f45"/><path d="M11 2h2v11h-2z" fill="#70a58d"/></svg>
        <svg viewBox="0 0 18 18"><path d="M.5 0v17.500H18" fill="none" stroke="#999"/><circle cx="5" cy="5" r="1.500" fill="#d35f45"/><circle cx="12" cy="4" r="1.500" fill="#70a58d"/><circle cx="9" cy="9" r="1.500" fill="#ecc273"/><circle cx="4" cy="10" r="1.500" fill="#4b80ba"/><circle cx="15" cy="9" r="1.500" fill="#8fb0d9"/><circle cx="10" cy="13" r="1.500" fill="#d35f45"/></svg>
        <svg viewBox="0 0 18 18"><circle cx="9" cy="9" r="8.500" fill="#8fb0d9"/><path d="M9 9V.500A8.500 8.500 0 0 0 .500 8z" fill="#f6dca6"/><path d="M9 9L.500 8A8.500 8.500 0 0 0 4 16z" fill="#e6a08c"/></svg>
        <svg viewBox="0 0 18 18"><circle cx="9" cy="9" r="6.500" fill="none" stroke="#4b80ba" stroke-width="4.500"/><path d="M9 2.500A6.500 6.500 0 0 1 14.500 6" fill="none" stroke="#ecc273" stroke-width="4.500"/><path d="M3 6A6.500 6.500 0 0 1 9 2.500" fill="none" stroke="#8fb0d9" stroke-width="4.500"/></svg>
        <svg viewBox="0 0 18 18"><path d="M0 0h18v18H0z" fill="#fff"/><path d="M1 1h6v5H1z" fill="#a9c0de"/><path d="M8 1h9v9H8zM1 7h6v3H1z" fill="#8fb0d9"/><path d="M0 10.500h18M0 5.500h12M7.500 10v8M12.500 0v10" stroke="#777"/></svg>
        <svg viewBox="0 0 18 18"><circle cx="9" cy="9" r="8.500" fill="#fff"/><circle cx="9" cy="9" r="7.500" fill="none" stroke="#4b80ba"/><path d="M9 1v16M1 9h16M3 5h12M3 13h12M9 1q-7 8 0 16M9 1q7 8 0 16" fill="none" stroke="#5aa07f"/></svg>

        <svg viewBox="0 0 18 18"><path d="M1 1h7l2 2 5-1 3-1-1 6-4 2 4 3-3 2 2 2-6-1-3 2-4-3-2-5z" fill="#b3b3b3"/><path d="M0 5h6v3h6v4H4z" fill="#4b80ba"/><path d="M15 0h3v5l-2 4h-1z" fill="#ecc273"/><path d="M0 4h12M3 9h10M7 2v6M8 8v8M4 12h12" stroke="#444"/></svg>
        <svg viewBox="0 0 18 18"><path d="M0 1h18v3H0zM4 9h10v3H4zM7 13h4v3H7z" fill="#8fb0d9"/><path d="M2 5h14v3H2z" fill="#ecc273"/></svg>
        <svg viewBox="0 0 18 18"><path d="M2 14a7 7 0 0 1 9-9" fill="none" stroke="#ecc273" stroke-width="4"/><path d="M10 5a7 7 0 0 1 3 1.500" fill="none" stroke="#e88c42" stroke-width="4"/><path d="M13 6a8 8 0 0 1 3 8" fill="none" stroke="#70a58d" stroke-width="4"/></svg>
        <svg viewBox="0 0 18 18"><path d="M.5.500h17v14H.5z" fill="#fff" stroke="#999"/><text x="9" y="8.500" class="n123">123</text><path d="M3 11.500h12" stroke="#555" stroke-width="1.200"/></svg>
        <svg viewBox="0 0 18 18"><path d="M.5-.5h17v17H.5z" fill="#fff" stroke="#999"/><path d="M2 1h4v14H2z" fill="#b3b3b3"/><path d="M8 1h5v2H8zM8 5h3v2H8z" fill="#4b80ba"/><path d="M8 10h2v3H8z" fill="#8fb0d9"/></svg>
        <svg viewBox="0 0 18 18"><path d="M.5 1.500h17v12H.5z" fill="#fff" stroke="#999"/><path d="M3 8l3-4 3 4z" fill="#5aa07f"/><path d="M9 3h6l-3 4z" fill="#d35f45"/><path d="M4 10.500h10" stroke="#555" stroke-width="1.200"/></svg>

        <svg viewBox="0 0 18 18"><path d="M0 0h17v17H0z" fill="#fff"/><path d="M0 0h17v3H0z" fill="#4b80ba"/><path d="M3 5h3v3H3z" fill="#e88c42"/><path d="M3 10h3v3H3z" fill="#ecc273"/><path d="M8 8h11l-4 5v5l-3-2v-3z" fill="#888"/></svg>
        <svg viewBox="0 0 18 18"><path d="M1 1h16v16.500H1z" fill="#fff"/><path d="M1 0h16v4H1z" fill="#4b80ba"/><path d="M1 8.500h16M1 13h16M6.500 4v14M11.500 4v14" stroke="#999"/></svg>
        <svg viewBox="0 0 18 18"><path d="M1 1h16v16.500H1z" fill="#fff"/><path d="M11.500 4H17v13h-5.500zM1 13h16v4.500H1z" fill="#c5d6ec"/><path d="M1 0h16v4H1z" fill="#4b80ba"/><path d="M1 8.500h16M1 13h16M6.500 4v14M11.500 4v14" stroke="#999"/></svg>
        <svg viewBox="0 0 18 18"><text x="9" y="17" class="rr">R</text></svg>
        <svg viewBox="0 0 18 18"><circle cx="9" cy="9" r="8.500" fill="#5c9d4e"/><path d="M2 5h14M1 9h16M2 13h14" stroke="#2f7fb8" stroke-width="2.500"/><path d="M9 .500q-7 8 0 17M9 .500q7 8 0 17M2 4l14 10M3 14L15 3" fill="none" stroke="#d5d5d5"/><circle cx="9" cy="9" r="8.500" fill="none" stroke="#aaa"/></svg>
        <svg viewBox="0 0 18 18"><path d="M2 7h2.500v2H2zM8 7h2.500v2H8zM14 7h2.500v2H14z" fill="#ddd"/></svg>
      </div>
      <div class="wells">
        <svg class="w1" width="20" height="20" viewBox="0 0 20 20"><path d="M0 .500h16" stroke="#fff"/><path d="M.5 3.500h19v7H.5zM.5 12.500h19v6H.5z" fill="none" stroke="#fff" stroke-dasharray="2 1"/></svg>
        <svg class="w2" width="18" height="20" viewBox="0 0 18 20"><rect x=".6" y=".6" width="13" height="4" rx="1.500" fill="none" stroke="#fff" stroke-width="1.200"/><path d="M14 2.500h3.300v5H8.500V11" fill="none" stroke="#fff" stroke-width="1.200"/><path d="M6.500 11h4v8.400h-4z" fill="none" stroke="#fff" stroke-width="1.200"/></svg>
      </div>
      <div class="lbl l-val">Values</div>
      <div class="drop d1">Add data fields here</div>
      <div class="sec">FILTERS</div>
      <div class="lbl l-pg">Page level filters</div>
      <div class="drop d2">Drag data fields here</div>
      <div class="lbl l-rp">Report level filters</div>
      <div class="drop d3">Drag data fields here</div>
      <div class="sec">DRILLTHROUGH</div>
      <div class="lbl l-keep">Keep all filters</div>
      <div class="lbl l-off">Off<svg width="30" height="12" viewBox="0 0 30 12"><circle cx="6" cy="6" r="5" fill="none" stroke="#fff" stroke-width="2"/><path d="M11 6h19" stroke="#fff" stroke-width="2"/></svg></div>
      <div class="drop d4">Drag drillthrough fields here</div>
    </div>

    <div class="fields">
      <div class="ph"><span>FIELDS</span><svg width="8" height="14" viewBox="0 0 8 14"><path d="M1 1l6 6-6 6" fill="none" stroke="#ccc" stroke-width="1.300"/></svg></div>
      <div class="search"><svg width="16" height="16" viewBox="0 0 16 16"><circle cx="10" cy="5.500" r="4.700" fill="none" stroke="#aaa" stroke-width="1.200"/><path d="M6.500 9L.500 15" stroke="#aaa" stroke-width="1.200"/></svg>Search</div>
      <div class="flist">
        <div><i></i><svg width="13" height="14" viewBox="0 0 13 14"><path d="M.5 12V.500H11" fill="none" stroke="#b0b0b0"/><path d="M2 2h11v12H2z" fill="#b0b0b0"/><path d="M4 4h7v2H4zM4 8h1.500v1H4zM7 8h1.500v1H7zM10 8h1v1h-1zM4 11h1.500v1H4zM7 11h1.500v1H7zM10 11h1v1h-1z" fill="#444"/></svg>Sales</div>
        <div><i></i><svg width="13" height="12" viewBox="0 0 13 12"><path d="M0 0h13v12H0z" fill="#b0b0b0"/><path d="M1.500 3.500h10v7h-10z" fill="#fff"/><path d="M1 7h11M4.800 3v8M8.200 3v8" stroke="#999"/></svg>Date</div>
        <div><i></i><svg width="13" height="12" viewBox="0 0 13 12"><path d="M0 0h13v12H0z" fill="#b0b0b0"/><path d="M1.500 3.500h10v7h-10z" fill="#fff"/><path d="M1 7h11M4.800 3v8M8.200 3v8" stroke="#999"/></svg>Locations</div>
        <div><i></i><svg width="13" height="12" viewBox="0 0 13 12"><path d="M0 0h13v12H0z" fill="#b0b0b0"/><path d="M1.500 3.500h10v7h-10z" fill="#fff"/><path d="M1 7h11M4.800 3v8M8.200 3v8" stroke="#999"/></svg>Manufacturers</div>
        <div><i></i><svg width="13" height="12" viewBox="0 0 13 12"><path d="M0 0h13v12H0z" fill="#b0b0b0"/><path d="M1.500 3.500h10v7h-10z" fill="#fff"/><path d="M1 7h11M4.800 3v8M8.200 3v8" stroke="#999"/></svg>Products</div>
      </div>
    </div>
  </div>
</section>
</div>

<!-- Taskbar -->
<div class="taskbar">
  <div class="start"><svg width="16" height="16" viewBox="0 0 16 16"><path d="M0 2.300l6.500-.9v6.200H0zM7.300 1.300L16 0v7.600H7.300zM0 8.400h6.500v6.200L0 13.700zM7.300 8.400H16V16l-8.700-1.300z" fill="#fff"/></svg></div>
  <div class="tsearch"><svg width="22" height="22" viewBox="0 0 22 22"><circle cx="11" cy="11" r="8.800" fill="none" stroke="#111" stroke-width="2.600"/></svg><span>Type here to search</span><svg class="mic" width="12" height="17" viewBox="0 0 12 17"><rect x="3.500" y=".5" width="5" height="10" rx="1" fill="none" stroke="#222"/><path d="M.8 7v3.500q0 2.500 2.500 2.500h5.400q2.500 0 2.500-2.500V7M6 13v3.500M3.500 16.500h5" fill="none" stroke="#222"/></svg></div>
  <div class="tb tv1"><svg width="17" height="16" viewBox="0 0 17 16"><path d="M0 2.500h12M0 13.500h12M2.500 5.500h8v5h-8zM.5 0v3M11.500 0v3M.5 13v3M11.500 13v3M15 0v16" fill="none" stroke="#eee" stroke-width="1.200"/><path d="M13.500 5h3v3h-3z" fill="#eee"/></svg></div>
  <div class="tb run"><svg width="24" height="22" viewBox="0 0 24 22"><path d="M1 2h8l1.500 2H23v15H1z" fill="#f4d67c"/><path d="M1 6h22v13H1z" fill="#fde69a"/><path d="M3 1h6v2H3z" fill="#e0a83c"/><path d="M5 20v-6q0-2 2-2h10q2 0 2 2v6h-4v-3.500H9V20z" fill="#3ba7e0"/></svg></div>
  <div class="tb run multi"><svg width="22" height="22" viewBox="0 0 22 22"><circle cx="11" cy="11" r="11" fill="#f7c82c"/><path d="M11 11L1.500 5.500A11 11 0 0 1 20.500 5.500H11z" fill="#e24335"/><path d="M1.500 5.500A11 11 0 0 0 10.500 22l4.800-8.500-9-.8z" fill="#2fa351"/><path d="M20.500 5.500H11l4.800 8-5.300 8.500A11 11 0 0 0 20.500 5.500z" fill="#fbcd30"/><circle cx="11" cy="11" r="5.200" fill="#fff"/><circle cx="11" cy="11" r="4.100" fill="#4a86ee"/></svg></div>
  <div class="tb run teams"><svg width="25" height="24" viewBox="0 0 25 24"><path d="M0 3l13-3v24L0 21z" fill="#5558af"/><circle cx="16" cy="5" r="2" fill="#fff"/><circle cx="21" cy="5" r="2" fill="#9fa2e0"/><path d="M14 9h4v9h-4zM19 9h4v7h-4z" fill="#c9cbf2"/><text x="6.500" y="16.500" class="tt">T</text><circle cx="19" cy="18.500" r="5.500" fill="#8cc63f" stroke="#fff"/><path d="M16.500 18.500l2 2 3.500-4" fill="none" stroke="#fff" stroke-width="1.500"/></svg></div>
  <div class="tb run"><svg width="24" height="24" viewBox="0 0 24 24"><path d="M7 2l14 2-5 19-15-4z" fill="#e8f3f6"/><path d="M8 3l13 1-5 17-14-3z" fill="#6fb4c4"/><path d="M8 3l13 1-2 7-13 0z" fill="#b6dbe3"/><path d="M7 1.500l14 2" stroke="#999" stroke-width="1.500" stroke-dasharray="1.500 1"/><path d="M21 4l2 1-5 18-2-1z" fill="#5b8c98"/></svg></div>
  <div class="tb run cur"><svg width="24" height="24" viewBox="0 0 24 24"><rect width="24" height="24" fill="#f2c811"/><path d="M5 17q-1-.5-1-2V8.500Q4 6 6.500 6h11Q20 6 20 8.500V15q0 1.500-1 2" fill="none" stroke="#222" stroke-width="1.500"/><path d="M7.500 14.500v3M10.500 13v5M13.500 11.500v6.500M16.500 9v9" stroke="#222" stroke-width="2"/></svg></div>
  <div class="tray">
    <svg class="people" width="17" height="17" viewBox="0 0 17 17"><circle cx="10.500" cy="4.500" r="3" fill="none" stroke="#eee" stroke-width="1.200"/><path d="M6 14q0-6 4.500-6t5.500 6M7 9a2.500 2.500 0 1 0-3 2M1 16q0-4.500 3.500-4.500T7 14" fill="none" stroke="#eee" stroke-width="1.200"/></svg>
    <svg class="chev" width="12" height="7" viewBox="0 0 12 7"><path d="M1 6l5-5 5 5" fill="none" stroke="#eee" stroke-width="1.300"/></svg>
    <svg class="net" width="17" height="16" viewBox="0 0 17 16"><path d="M3.500 2.500h12v8h-12zM9.500 11v3M6 14.500h8" fill="none" stroke="#eee" stroke-width="1.200"/><path d="M.5 1.500h4v5h-4zM2.500 7v7.500" fill="#222" stroke="#eee"/></svg>
    <svg width="18" height="14" viewBox="0 0 18 14"><path d="M1 5h3l4-4v12L4 9H1z" fill="none" stroke="#eee" stroke-width="1.200"/><path d="M10.500 4.500q2 2.500 0 5M13 2.500q3.500 4.500 0 9M15.500 1q4 6 0 12" fill="none" stroke="#eee" stroke-width="1.100"/></svg>
    <div class="clock"><span>3:02 PM</span><span>1/11/2019</span></div>
    <div class="action"><svg width="18" height="17" viewBox="0 0 18 17"><path d="M1 1h16v12H8l-4 3.500V13H1z" fill="#fff"/><path d="M4 4.500h10M4 7h10M4 9.500h7" stroke="#333"/></svg><b>5</b></div>
  </div>
</div>
</div>
</body>
</html>
```
FILE: styles.css
```css
* { box-sizing: border-box; }
body { margin: 0; font-family: "Open Sans", "Noto Sans", sans-serif; background: #1d1d1d; overflow: hidden; }
svg { display: block; flex: none; }
svg text { white-space: pre; }
.desktop { width: 1920px; height: 1080px; display: flex; flex-direction: column; overflow: hidden; }
.windows { height: 1040px; display: flex; }

/* Browser */
.browser { width: 672px; height: 1040px; flex: none; overflow: hidden; background: #fff; border: 1px solid #8f8f8f; border-right: 0; display: flex; flex-direction: column; white-space: nowrap; }
.tabstrip { height: 42px; flex: none; background: #e5e8ec; display: flex; align-items: flex-end; padding-left: 8px; }
.tab { width: 38px; height: 34px; position: relative; display: flex; justify-content: center; align-items: center; }
.tab.active { background: #fff; border-radius: 7px 7px 0 0; }
.tab + .tab + .tab::before, .tab:nth-child(5)::after { content: ""; position: absolute; left: 0; top: 7px; width: 1px; height: 20px; background: #8e9195; }
.tab:nth-child(5)::after { left: 38px; }
.fav { font: bold 10.500px/12px "Liberation Sans", sans-serif; display: flex; letter-spacing: -1.200px; }
.fav i { font-style: normal; color: #b72667; }
.fav b { color: #77797c; }
.fav u { text-decoration: none; color: #1e96e6; font-weight: bold; font-size: 12px; }
.plus { margin: 0 0 11px 17px; }
.toolbar { height: 37px; flex: none; display: flex; align-items: center; padding-left: 14px; border-bottom: 1px solid #b6b6b6; }
.nav { margin-right: 16px; }
.omnibox { height: 28px; flex: 1; margin-left: -2px; background: #f1f3f4; border-radius: 14px 0 0 14px; display: flex; align-items: center; padding-left: 13px; }
.url { margin-left: 10px; font-size: 13.2px; color: #6f7378; }
.url em { font-style: normal; color: #222; }
.page { flex: 1; overflow: hidden; display: flex; flex-direction: column; }
.course { height: 770px; flex: none; margin-left: 15px; border-left: 1px solid #bdbdbd; border-bottom: 1px solid #bdbdbd; box-shadow: 0 1px 2px rgba(0,0,0,.12); padding-left: 50px; font-size: 12px; color: #3a3a3a; }
.submit-row { display: flex; height: 34px; }
.submit-row.first { margin-top: 13px; }
.submit-row.second { margin-top: 38px; }
.submit { width: 71px; border: 1px solid #e2e2e2; border-radius: 2px; background: #f9f9f9; color: #b4b4b4; line-height: 33px; text-align: center; }
.used { margin-left: 7px; font-size: 10.8px; color: #5e5e5e; line-height: 31px; }
.second .used { line-height: 33px; }
.result { margin-top: 22px; border-top: 2px solid #008100; height: 30px; display: flex; align-items: center; padding-left: 7px; gap: 12px; color: #313131; }
.result.two { height: 32px; }
.rule { height: 1px; background: #d9d9d9; }
.r1 { margin-top: 16px; }
p { margin: 0; }
.intro { margin-top: 11px; line-height: 19px; }
.steps { margin: 17px 0 0; padding: 0 0 0 12px; line-height: 19px; }
.steps li { margin-bottom: 8.700px; }
.r2 { margin-top: 23px; }
h3 { margin: 11px 0 0; font-weight: 400; font-size: 16.200px; line-height: 22px; color: #5a5a5a; }
.points { margin-top: 7px; font-size: 10.5px; line-height: 16px; color: #5e5e5e; }
.ask { margin-top: 15px; line-height: 16px; color: #313131; }
.choice { height: 35px; margin-top: 15px; border: 2px solid #e2e2e2; border-radius: 3px 0 0 3px; border-right: 0; display: flex; align-items: center; padding-left: 10px; color: #313131; }
.choice.right { margin-top: 8px; border-color: #008100; }
.choice svg { margin: -2px 0 0 4px; }
.radio { width: 9px; height: 9px; border: 1px solid #999; border-radius: 50%; background: #e2e2e2; margin: -3px 9px 0 0; }
.radio.on { background: radial-gradient(#555 0 2px, #e2e2e2 2.500px); }
.pager { margin: 37px 0 0 315px; width: 180px; height: 34px; border: 1px solid #e4e4e4; border-radius: 2px; display: flex; }
.pager span { width: 89px; display: flex; align-items: center; justify-content: center; gap: 10px; color: #313131; }
.pager .next { border-left: 1px solid #e4e4e4; }
.footer { margin-top: 60px; flex: 1; border-top: 1px solid #e2e2e2; background: #fcfcfc; padding-top: 15px; display: flex; overflow: hidden; }
.logo-col { width: 164px; flex: none; padding: 1px 0 0 43px; }
.lg-e { font: bold 44px "Liberation Sans", sans-serif; fill: #b72667; }
.lg-d { font: bold 43px "Liberation Sans", sans-serif; fill: #888b8e; mix-blend-mode: multiply; }
.lg-x { font: bold 42px "DejaVu Serif", serif; fill: #1ea0dc; stroke: #1ea0dc; stroke-width: 1px; mix-blend-mode: multiply; }
.lg-r { font: 8px "Open Sans", sans-serif; fill: #1ea0dc; }
.fcol { width: 147.500px; height: 130px; flex: none; border-left: 1px solid #e2e2e2; padding-left: 17px; }
.fcol.connect { padding-left: 32px; }
.fcol h4 { margin: 0 0 17px; font: bold 15.500px/22px "Liberation Serif", serif; color: #5e5e5e; }
.fcol a { display: block; font-size: 12px; line-height: 18px; color: #0075b4; margin-bottom: 4px; }
.fcol.social { padding: 10px 0 0 16px; }
.soc { display: flex; gap: 12px; }
.appstore { margin-top: 34px; width: 84px; height: 26px; background: #000; border-radius: 4px; color: #fff; display: flex; align-items: center; gap: 6px; padding-left: 7px; font-size: 13px; line-height: 12px; }
.appstore small { display: block; font-size: 6px; line-height: 8px; }

/* Power BI */
.pbi { width: 1248px; height: 1040px; background: #fff; position: relative; box-shadow: -1px 0 14px rgba(0,0,0,.4); display: flex; flex-direction: column; font-size: 10.9px; color: #222; white-space: nowrap; overflow: visible; }
.titlebar { height: 31px; display: flex; align-items: center; padding: 0 18px 1px 8px; border-top: 1px solid #aaa; }
.vsep { width: 1px; height: 13px; background: #aaa; margin-left: 7px; }
.q-save { margin-left: 10px; }
.q-undo { margin-left: 8px; }
.q-redo { margin-left: 7px; }
.q-more { margin: 3px 0 0 6px; }
.vsep.s2 { margin-left: 8px; }
.ttl { font-size: 11.400px; margin-left: 7px; color: #111; }
.wb { margin-left: auto; }
.tabs { height: 23px; display: flex; line-height: 24px; font-size: 11.200px; position: relative; }
.t-file { width: 56px; background: #1979ca; color: #fff; text-align: center; }
.t-home { width: 76px; height: 24px; position: relative; z-index: 1; text-align: center; background: #f5f6f7; border: 1px solid #d5d8dc; border-bottom: 0; line-height: 23px; }
.t-view { margin-left: 15px; width: 54px; }
.t-mod { width: 88px; }
.user { margin-left: auto; color: #111; }
.collapse { margin: 9px 0 0 21px; }
.help { width: 15px; height: 15px; margin: 3px 4px 0 10px; border-radius: 50%; background: #0b6cc4; color: #fff; font: bold 11px/15px "Open Sans", sans-serif; text-align: center; }
.ribbon { height: 93px; background: #f5f6f7; border-top: 1px solid #d5d8dc; border-bottom: 1px solid #d0d2d5; display: flex; padding-top: 2px; }
.group { height: 88px; border-right: 1px solid #dfe1e4; display: flex; flex-direction: column; }
.items { height: 73px; padding-top: 6px; display: flex; }
.glabel { text-align: center; color: #444; line-height: 14px; }
.g-clip { width: 156px; } .g-clip .items { padding-left: 2px; }
.g-ext { width: 260px; } .g-ext .glabel { padding-right: 2px; }
.g-ins { width: 264px; } .g-ins .glabel { padding-right: 2px; }
.g-ins .items { padding-left: 1px; }
.g-cus { width: 121px; } .g-cus .items { padding-left: 3px; }
.g-thm { width: 57px; }
.g-rel { width: 87px; } .g-rel .glabel { padding-right: 2px; }
.g-calc { width: 139px; } .g-calc .glabel { padding-right: 2px; }
.g-shr { width: 54px; } .g-shr .glabel { padding-right: 2px; }
.big { width: 48px; flex: none; display: flex; flex-direction: column; align-items: center; text-align: center; line-height: 13px; }
.big svg { margin-bottom: 3px; overflow: visible; }
.big i, .car { display: inline-block; border: 3px solid transparent; border-top: 4px solid #333; border-bottom: 0; margin-left: 3px; vertical-align: 2px; }
.big i.only { margin-left: 0; }
.w40 { width: 40px; } .w46 { width: 46px; } .w51 { width: 51px; } .w52 { width: 52px; } .w54 { width: 54px; } .w60 { width: 60px; } .w70 { width: 70px; } .w84 { width: 84px; }
.gs { width: 1px; height: 54px; background: #dfe1e4; }
.dim { color: #808080; }
.stack { display: flex; flex-direction: column; padding-left: 2px; margin-top: -4px; }
.stack div { height: 22px; display: flex; align-items: center; gap: 3px; }
.st2 { padding-left: 4px; }
.g-calc .stack { padding-left: 7px; }
.car { margin-left: 0; }

.work { flex: 1; display: flex; min-height: 0; }
.rail { width: 42px; background: #212121; }
.r { height: 42px; display: flex; align-items: center; padding-left: 12px; }
.r.on { border-left: 3px solid #f2c811; padding-left: 9px; height: 43px; }
.canvas { width: 843px; background: #e9e9e9; }
.report { display: block; }
.report text { font-family: "Open Sans", sans-serif; }
.report .headline text { font: bold 46px "Liberation Serif", serif; fill: #333; stroke: #333; stroke-width: .5px; }
.slicer text { font-size: 8.600px; fill: #555; letter-spacing: -.2px; }
.slicer .yr { font-size: 7px; fill: #333; letter-spacing: 0; }
.ct text { font-size: 7.700px; fill: #8f8f8f; }
.dl text { font-size: 6.600px; font-weight: 600; fill: #fff; text-anchor: middle; letter-spacing: -.1px; }
.ax text { font-size: 6.800px; fill: #777; letter-spacing: -.2px; }
.end text { text-anchor: end; }
.mid text { text-anchor: middle; }
.lg text { font-size: 6.900px; fill: #5c5c5c; }
.lg .seg { fill: #333; }
.tm text { font-size: 7.500px; font-weight: 600; fill: #fff; }
.tv text { font-size: 6.700px; font-weight: 600; fill: #fff; }
.mp text { font-size: 36px; fill: #6d6d6d; stroke: #fff; stroke-width: 4px; stroke-opacity: .6; paint-order: stroke; }
.oc text { font-size: 23px; font-style: italic; fill: #3d5db8; }
.report .bing { font-size: 25px; fill: #333; stroke: #333; stroke-width: .6px; }
.report .cr { font-size: 17px; fill: #555; stroke: #fff; stroke-width: 3px; stroke-opacity: .5; paint-order: stroke; }
.report .terms { font-size: 17px; fill: #5b6fc0; text-decoration: underline; }
.sheets { height: 4px; background: #dcdcdc; border-top: 1px solid #c4c4c4; display: flex; }
.s-on { width: 108px; margin-left: 185px; background: #fff; }
.s-add { width: 39px; margin-left: 196px; background: #f2c811; }

.viz { width: 182px; background: #444; border-left: 1px solid #000; border-right: 1px solid #000; color: #f0f0f0; font-size: 11.300px; }
.fields { width: 181px; background: #444; color: #f2f2f2; }
.ph { height: 48px; background: #212121; display: flex; align-items: center; justify-content: space-between; padding: 0 12px; font: 500 14.600px Roboto, sans-serif; color: #f4f4f4; }
.fields .ph { padding-right: 13px; }
.grid { height: 124px; display: grid; grid-template-columns: repeat(6, 18px); grid-auto-rows: 18px; column-gap: 10px; row-gap: 6px; padding: 5px 0 0 9px; }
.grid svg { width: 18px; height: 18px; overflow: visible; }
.n123 { font: bold 8px "Open Sans", sans-serif; fill: #4b80ba; text-anchor: middle; }
.rr { font: 22px "Open Sans", sans-serif; fill: #8fb0d9; stroke: #8fb0d9; text-anchor: middle; }
.wells { height: 36px; background: #212121; display: flex; padding: 8px 0 0 12px; }
.w1 { width: 40px; padding: 0 10px; height: 28px; border-bottom: 2px solid #f2c811; }
.w2 { margin-left: 11px; }
.lbl { line-height: 16px; padding-left: 12px; }
.l-val { margin-top: 7px; }
.drop { width: 170px; height: 26px; margin-left: 4px; border: 1px dashed #6c6c6c; border-radius: 3px; background: #4a4a4a; color: #b3b3b3; line-height: 25px; padding-left: 8px; }
.d1 { margin-top: 6px; height: 27px; padding-left: 10px; }
.sec { height: 36px; margin-top: 4px; background: #212121; font: 500 14.600px/43px Roboto, sans-serif; padding-left: 14px; color: #f4f4f4; }
.l-pg { margin-top: 10px; padding-left: 16px; }
.d2, .d3 { margin-top: 5px; }
.l-rp { margin-top: 7px; padding-left: 16px; }
.l-keep { margin-top: 9px; padding-left: 9px; }
.l-off { margin-top: 8px; padding-left: 13px; display: flex; align-items: center; gap: 14px; }
.d4 { margin-top: 8px; }
.search { width: 173px; height: 30px; margin: 4px 0 0 4px; border: 1px solid #000; background: #212121; display: flex; align-items: center; gap: 8px; padding-left: 11px; font-size: 11.800px; color: #a8a8a8; }
.flist { margin-top: 4px; border-top: 1px solid #363636; padding-top: 8px; font-size: 11.100px; }
.flist div { height: 27px; display: flex; align-items: center; padding-left: 10px; }
.flist i { border: 4px solid transparent; border-left: 5px solid #a0a0a0; border-right: 0; margin-right: 8px; }
.flist svg { margin-right: 12px; }

/* Taskbar */
.taskbar { height: 40px; background: linear-gradient(90deg, #2a2a2a 0, #2a2a2a 560px, #161616 690px, #121212 1300px, #1f1f1f 1920px); display: flex; color: #fff; }
.start { width: 48px; display: flex; align-items: center; justify-content: center; }
.tsearch { width: 344px; background: #f2f2f2; color: #333; display: flex; align-items: center; font-size: 13.900px; padding-left: 9px; }
.tsearch span { margin-left: 9px; flex: 1; }
.mic { margin-right: 15px; }
.tb { width: 49px; display: flex; align-items: center; justify-content: center; }
.tb.tv1 { width: 50px; }
.run { background: linear-gradient(#76b9ed, #76b9ed) 50% 100% / 40px 3px no-repeat; }
.teams svg { margin-left: 3px; }
.tb.cur { width: 48px; margin-left: 1px; background: linear-gradient(#76b9ed, #76b9ed) 50% 100% / 48px 3px no-repeat, #4a4a4a; }
.tt { font: bold 13px "Open Sans", sans-serif; fill: #fff; text-anchor: middle; }
.tray { margin-left: auto; display: flex; align-items: center; }
.people { margin-right: 22px; }
.chev { margin-right: 9px; }
.net { margin-right: 6px; }
.clock { width: 70px; margin-right: 3px; font-size: 11px; line-height: 18px; display: flex; flex-direction: column; align-items: center; }
.action { width: 48px; height: 40px; position: relative; padding: 12px 0 0 7px; }
.action b { position: absolute; left: 15px; top: 18px; width: 16px; height: 16px; border-radius: 50%; background: #333; border: 1px solid #ccc; font: 10px/14px "Open Sans", sans-serif; text-align: center; }
```
